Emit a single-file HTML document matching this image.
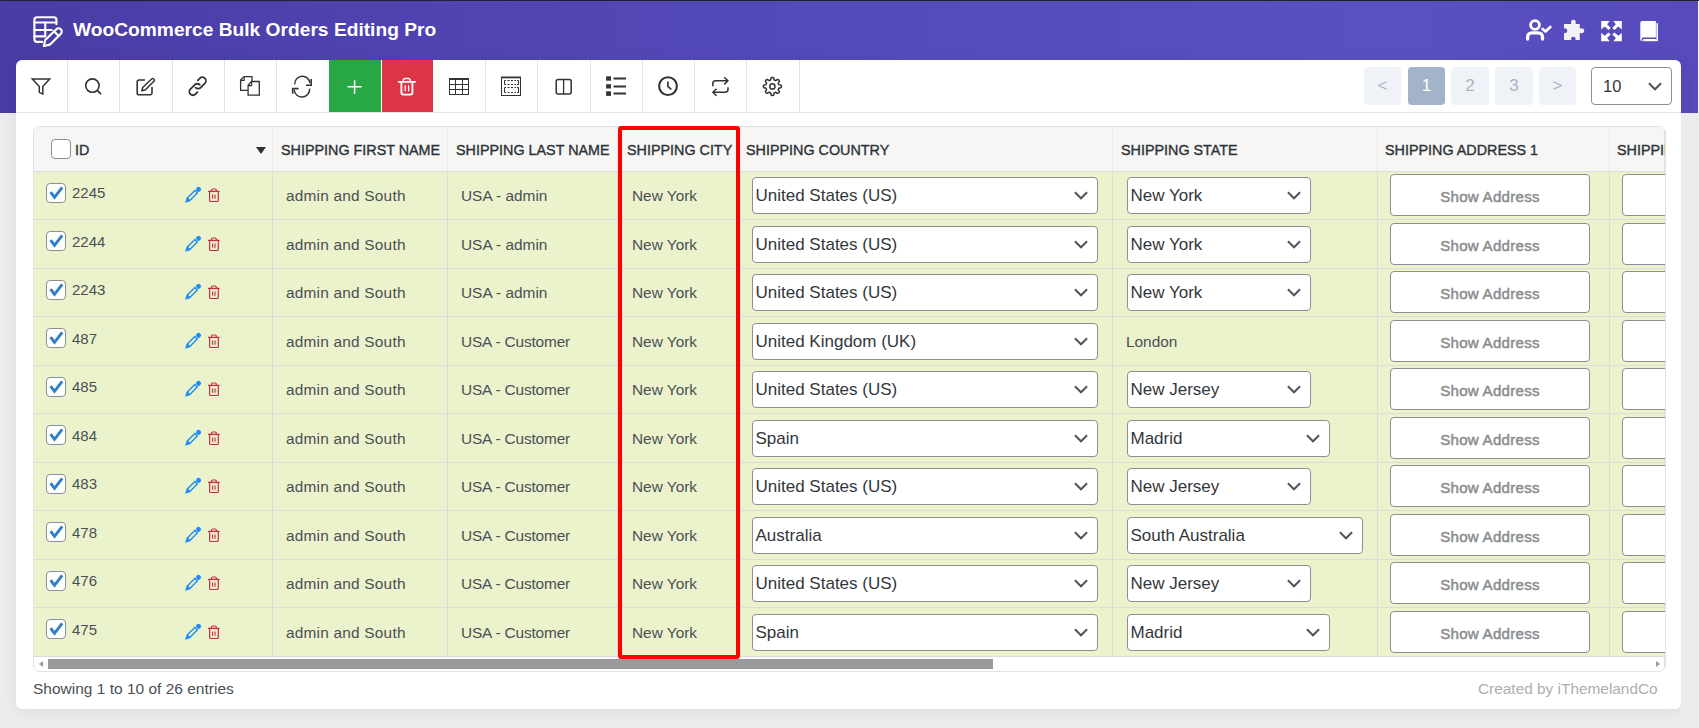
<!DOCTYPE html>
<html><head><meta charset="utf-8">
<style>
*{box-sizing:border-box;margin:0;padding:0}
html,body{width:1699px;height:728px;overflow:hidden}
body{position:relative;background:#ececec;font-family:"Liberation Sans",sans-serif;color:#2c3338}
.abs{position:absolute}
.t{position:absolute;white-space:nowrap}
.hdr{left:0;top:0;width:1699px;height:113px;background:linear-gradient(90deg,rgb(73,60,165) 0px,rgb(80,68,178) 450px,rgb(86,76,188) 1000px,rgb(90,80,194) 1400px,rgb(86,74,188) 1699px)}
.topbar{left:0;top:0;width:1699px;height:1px;background:#1d2327}
.card{left:16px;top:60px;width:1665px;height:649px;background:#fff;border-radius:6px;box-shadow:0 3px 16px rgba(0,0,0,0.07)}
.tb{position:absolute;top:60px;height:52px;border-right:1px solid #e3e3e3}
.tbline{left:16px;top:112px;width:1665px;height:1px;background:#e3e3e3}
.pg{position:absolute;top:67px;width:37px;height:38px;border-radius:4px;background:#eff3f7;color:#a9b4c2;font-size:17px;text-align:center;line-height:38px}
.tbl{left:33px;top:126px;width:1632px;height:546px;border:1px solid #e2e2e2;border-radius:6px;overflow:hidden;background:#fff}
.th{font-weight:400;font-size:14.35px;color:#2c3338;-webkit-text-stroke:0.35px #2c3338;transform:scaleY(1.08);transform-origin:0 78%}
.cell{font-size:15.4px;color:#4b4f54}
.sel{position:absolute;height:37px;border:1px solid #8c8f94;border-radius:4px;background:#fff}
.selt{position:absolute;left:2.5px;top:0;line-height:35px;font-size:17px;color:#32373c;white-space:nowrap}
.btn{position:absolute;height:42px;border:1px solid #8c8f94;border-radius:4px;background:#fff;color:#8a8d91;font-weight:400;font-size:15.1px;letter-spacing:0.25px;-webkit-text-stroke:0.5px #8a8d91;text-align:center;line-height:43px}
.vl{position:absolute;width:1px;background:#dcdcdc}
.hl{position:absolute;height:1px;background:#dcdcdc}
.cb{position:absolute;width:20px;height:20px;border:1px solid #8c8f94;border-radius:4px;background:#fff}
</style></head><body>
<div class="abs hdr"></div>
<div class="abs topbar"></div>

<svg class="abs" style="left:28px;top:10px" width="42" height="42" viewBox="28 10 42 42">
<g fill="none" stroke="#fff" stroke-width="2.1" stroke-linecap="round" stroke-linejoin="round">
<path d="M42.2 41.9 H37 a2.6 2.6 0 0 1 -2.6 -2.6 V19.8 a2.6 2.6 0 0 1 2.6 -2.6 H53.8 a2.6 2.6 0 0 1 2.6 2.6 V24.3"/>
<path d="M34.4 22.5 H56.4"/><path d="M34.4 30 H51.8"/><path d="M34.4 36.4 H44.6"/><path d="M45.25 22.5 V36.4"/>
<g transform="translate(43.8 46) rotate(-44.5)">
<path d="M0 0 L5.2 -3.2 L20.8 -3.2 a3 3 0 0 1 3 3 V0.2 a3 3 0 0 1 -3 3 L5.2 3.2 Z"/>
<path d="M17.6 -3.3 V3.3"/>
</g>
</g></svg>
<div class="t" style="left:73px;top:18px;font-size:19.2px;font-weight:700;color:#fff;line-height:24px">WooCommerce Bulk Orders Editing Pro</div>

<svg class="abs" style="left:1520px;top:14px" width="150" height="32" viewBox="1520 14 150 32">
<circle cx="1535" cy="25" r="4.4" fill="none" stroke="#fff" stroke-width="2.8"/>
<path d="M1527.6 39 V37 a4.2 4.2 0 0 1 4.2 -4.2 H1538.3 a4.2 4.2 0 0 1 4.2 4.2 V39" fill="none" stroke="#fff" stroke-width="3.3" stroke-linecap="round"/>
<path d="M1542.6 29 L1545.5 31.5 L1550.3 27" fill="none" stroke="#fff" stroke-width="2.7" stroke-linecap="round" stroke-linejoin="round"/>
<path fill="#f3f3f3" d="M1564 23.9 H1571.2 V23 A2.4 2.4 0 1 1 1575.6 23 V23.9 H1579.8 V28.6 H1580.8 A2.4 2.4 0 1 1 1580.8 32.9 H1579.8 V39.9 H1575.5 V39.5 A2.2 2.2 0 1 0 1571.2 39.5 V39.9 H1564 V32.9 H1564.6 A2.2 2.2 0 1 0 1564.6 28.6 H1564 Z"/>
<g fill="#fff">
<path d="M1601.2 21 H1609.7 L1607.1 24.3 L1610.7 27.9 L1608.6 29.9 L1604.6 26.5 L1601.2 29.6 Z"/>
<path d="M1621.8 21 H1613.3 L1615.9 24.3 L1612.3 27.9 L1614.4 29.9 L1618.4 26.5 L1621.8 29.6 Z"/>
<path d="M1601.2 41.3 H1609.7 L1607.1 38 L1610.7 34.4 L1608.6 32.4 L1604.6 35.8 L1601.2 32.7 Z"/>
<path d="M1621.8 41.3 H1613.3 L1615.9 38 L1612.3 34.4 L1614.4 32.4 L1618.4 35.8 L1621.8 32.7 Z"/>
<path d="M1642 21 H1655.9 V41 H1642 a1.7 1.7 0 0 1 -1.7 -1.7 V22.7 a1.7 1.7 0 0 1 1.7 -1.7 Z"/>
<rect x="1656.4" y="23.2" width="1.6" height="17.8"/>
<rect x="1642" y="40.4" width="16" height="0.8"/>
</g>
<path d="M1656 38.3 H1643.3 a1 1 0 0 0 0 2" fill="none" stroke="#5648b9" stroke-width="1.4"/>
</svg>

<div class="abs card"></div>
<div class="abs" style="left:67px;top:60px;width:1px;height:52px;background:#e3e3e3"></div>
<div class="abs" style="left:119px;top:60px;width:1px;height:52px;background:#e3e3e3"></div>
<div class="abs" style="left:172px;top:60px;width:1px;height:52px;background:#e3e3e3"></div>
<div class="abs" style="left:224px;top:60px;width:1px;height:52px;background:#e3e3e3"></div>
<div class="abs" style="left:276px;top:60px;width:1px;height:52px;background:#e3e3e3"></div>
<div class="abs" style="left:485px;top:60px;width:1px;height:52px;background:#e3e3e3"></div>
<div class="abs" style="left:537px;top:60px;width:1px;height:52px;background:#e3e3e3"></div>
<div class="abs" style="left:590px;top:60px;width:1px;height:52px;background:#e3e3e3"></div>
<div class="abs" style="left:642px;top:60px;width:1px;height:52px;background:#e3e3e3"></div>
<div class="abs" style="left:694px;top:60px;width:1px;height:52px;background:#e3e3e3"></div>
<div class="abs" style="left:746px;top:60px;width:1px;height:52px;background:#e3e3e3"></div>
<div class="abs" style="left:799px;top:60px;width:1px;height:52px;background:#e3e3e3"></div>
<div class="abs" style="left:329px;top:60px;width:52px;height:52px;background:#28a745"></div>
<div class="abs" style="left:382px;top:60px;width:51px;height:52px;background:#dc3545"></div>
<svg class="abs" style="left:16px;top:60px" width="800" height="52" viewBox="16 60 800 52">
<path d="M32.3 79.1 H49.7 L42.8 86.6 V94.1 L39.3 92.4 V86.6 Z" fill="none" stroke="#333" stroke-width="1.5" stroke-linejoin="miter"/>
<circle cx="92.4" cy="85.6" r="6.7" fill="none" stroke="#333" stroke-width="1.6"/><path d="M97.2 90.4 L101 94.2" fill="none" stroke="#333" stroke-width="1.7"/>
<path d="M145 80 H139 a1.8 1.8 0 0 0 -1.8 1.8 V93 a1.8 1.8 0 0 0 1.8 1.8 H150.2 a1.8 1.8 0 0 0 1.8 -1.8 V87" fill="none" stroke="#333" stroke-width="1.6"/>
<path d="M151.6 79 a1.6 1.6 0 0 1 2.3 2.3 L145.2 90 L141.9 90.8 L142.7 87.5 Z" fill="none" stroke="#333" stroke-width="1.5" stroke-linejoin="round"/>
<path d="M195.6 87.6 a3.6 3.6 0 0 0 5.1 0 L204.9 83.4 a3.6 3.6 0 0 0 -5.1 -5.1 L197.8 80.3" fill="none" stroke="#333" stroke-width="1.8" stroke-linecap="round"/>
<path d="M199.8 84.8 a3.6 3.6 0 0 0 -5.1 0 L190.4 89.1 a3.6 3.6 0 0 0 5.1 5.1 L197.5 92.2" fill="none" stroke="#333" stroke-width="1.8" stroke-linecap="round"/>
<path d="M248 90.4 H240.6 V80 L244 76.6 H252 V82" fill="none" stroke="#333" stroke-width="1.3"/>
<path d="M240.6 80.4 H244.2 V76.6" fill="none" stroke="#333" stroke-width="1.1"/>
<path d="M251.5 81.5 H259.3 V95.2 H248.1 V85.2 Z" fill="none" stroke="#333" stroke-width="1.3"/>
<path d="M248.1 85.6 H251.7 V81.5" fill="none" stroke="#333" stroke-width="1.1"/>
<path d="M294.8 84.4 A7.3 7.3 0 0 1 309.8 83" fill="none" stroke="#333" stroke-width="1.5"/>
<path d="M311.2 79 V85.3 H306" fill="none" stroke="#333" stroke-width="1.6"/>
<path d="M309.6 88.6 A7.3 7.3 0 0 1 294.2 90" fill="none" stroke="#333" stroke-width="1.5"/>
<path d="M298.6 88.6 H292.7 V93.8" fill="none" stroke="#333" stroke-width="1.6"/>
<path d="M354.6 80.2 V93.7 M347.6 86.8 H361.6" stroke="#fff" stroke-width="1.5"/>
<path d="M398.6 81.8 H415.2" stroke="#fff" stroke-width="1.7" stroke-linecap="round"/>
<path d="M403.3 81.6 V80.3 a1.8 1.8 0 0 1 1.8 -1.8 H408.3 a1.8 1.8 0 0 1 1.8 1.8 V81.6" fill="none" stroke="#fff" stroke-width="1.5"/>
<path d="M401.4 81.8 V92.6 a2 2 0 0 0 2 2 H410.4 a2 2 0 0 0 2 -2 V81.8" fill="none" stroke="#fff" stroke-width="1.9"/>
<path d="M405.2 85.3 V91.2 M408.6 85.3 V91.2" stroke="#fff" stroke-width="1.3"/>
<path d="M449.5 78 V95 M468.5 78 V95 M449 94.5 H469 M449 84.5 H469 M449 89.5 H469 M455.5 80 V94 M462.5 80 V94" stroke="#333" stroke-width="1"/>
<rect x="449" y="78" width="20" height="2" fill="#333"/>
<path d="M501.5 77 V96 M520.5 77 V96 M501 95.5 H521" stroke="#333" stroke-width="1"/>
<rect x="501" y="76.5" width="20" height="1.8" fill="#333"/>
<path d="M506 80.5 H504.5 V84.5 H506 M517 80.5 H518.5 V84.5 H517 M507.5 80.5 H509.5 M511 80.5 H513 M514.5 80.5 H516 M507.5 84.5 H509.5 M511 84.5 H513 M514.5 84.5 H516" fill="none" stroke="#333" stroke-width="1"/>
<path d="M506 87.5 H504.5 V92.5 H506 M517 87.5 H518.5 V92.5 H517 M507.5 87.5 H509.5 M511 87.5 H513 M514.5 87.5 H516 M507.5 92.5 H509.5 M511 92.5 H513 M514.5 92.5 H516" fill="none" stroke="#333" stroke-width="1"/>
<rect x="556.2" y="79.4" width="15" height="14.6" rx="2" fill="none" stroke="#333" stroke-width="1.5"/>
<path d="M563.6 79.4 V94" fill="none" stroke="#333" stroke-width="1.3"/>
<rect x="606.1" y="76.3" width="4.9" height="4.4" fill="#333"/><rect x="606.1" y="84.2" width="4.9" height="4.3" fill="#333"/><rect x="606.1" y="91.3" width="4.9" height="4.6" fill="#333"/>
<path d="M613.5 78.6 H626 M613.5 86.4 H626 M613.5 93.6 H626" stroke="#333" stroke-width="2"/>
<circle cx="668" cy="86.1" r="8.9" fill="none" stroke="#333" stroke-width="2.1"/>
<path d="M667.9 81.4 V86.4 L671.3 89.4" fill="none" stroke="#333" stroke-width="1.7"/>
<path d="M712.8 86.2 V83.8 a3 3 0 0 1 3 -3 H728" fill="none" stroke="#333" stroke-width="1.5"/>
<path d="M724.2 77.2 L727.9 80.8 L724.2 84.4" fill="none" stroke="#333" stroke-width="1.5"/>
<path d="M728 87.3 V89.3 a3 3 0 0 1 -3 3 H713" fill="none" stroke="#333" stroke-width="1.5"/>
<path d="M716.5 88.8 L712.9 92.3 L716.5 95.8" fill="none" stroke="#333" stroke-width="1.5"/>
<path d="M772.40 77.40 L772.75 77.41 L773.10 77.47 L773.44 77.60 L773.73 77.98 L773.92 78.75 L774.05 79.52 L774.23 79.91 L774.45 80.09 L774.69 80.20 L774.93 80.30 L775.17 80.40 L775.41 80.49 L775.69 80.52 L776.10 80.37 L776.73 79.91 L777.41 79.50 L777.88 79.44 L778.22 79.59 L778.50 79.80 L778.76 80.04 L779.00 80.30 L779.21 80.58 L779.36 80.92 L779.30 81.39 L778.89 82.07 L778.43 82.70 L778.28 83.11 L778.31 83.39 L778.40 83.63 L778.50 83.87 L778.60 84.11 L778.71 84.35 L778.89 84.57 L779.28 84.75 L780.05 84.88 L780.82 85.07 L781.20 85.36 L781.33 85.70 L781.39 86.05 L781.40 86.40 L781.39 86.75 L781.33 87.10 L781.20 87.44 L780.82 87.73 L780.05 87.92 L779.28 88.05 L778.89 88.23 L778.71 88.45 L778.60 88.69 L778.50 88.93 L778.40 89.17 L778.31 89.41 L778.28 89.69 L778.43 90.10 L778.89 90.73 L779.30 91.41 L779.36 91.88 L779.21 92.22 L779.00 92.50 L778.76 92.76 L778.50 93.00 L778.22 93.21 L777.88 93.36 L777.41 93.30 L776.73 92.89 L776.10 92.43 L775.69 92.28 L775.41 92.31 L775.17 92.40 L774.93 92.50 L774.69 92.60 L774.45 92.71 L774.23 92.89 L774.05 93.28 L773.92 94.05 L773.73 94.82 L773.44 95.20 L773.10 95.33 L772.75 95.39 L772.40 95.40 L772.05 95.39 L771.70 95.33 L771.36 95.20 L771.07 94.82 L770.88 94.05 L770.75 93.28 L770.57 92.89 L770.35 92.71 L770.11 92.60 L769.87 92.50 L769.63 92.40 L769.39 92.31 L769.11 92.28 L768.70 92.43 L768.07 92.89 L767.39 93.30 L766.92 93.36 L766.58 93.21 L766.30 93.00 L766.04 92.76 L765.80 92.50 L765.59 92.22 L765.44 91.88 L765.50 91.41 L765.91 90.73 L766.37 90.10 L766.52 89.69 L766.49 89.41 L766.40 89.17 L766.30 88.93 L766.20 88.69 L766.09 88.45 L765.91 88.23 L765.52 88.05 L764.75 87.92 L763.98 87.73 L763.60 87.44 L763.47 87.10 L763.41 86.75 L763.40 86.40 L763.41 86.05 L763.47 85.70 L763.60 85.36 L763.98 85.07 L764.75 84.88 L765.52 84.75 L765.91 84.57 L766.09 84.35 L766.20 84.11 L766.30 83.87 L766.40 83.63 L766.49 83.39 L766.52 83.11 L766.37 82.70 L765.91 82.07 L765.50 81.39 L765.44 80.92 L765.59 80.58 L765.80 80.30 L766.04 80.04 L766.30 79.80 L766.58 79.59 L766.92 79.44 L767.39 79.50 L768.07 79.91 L768.70 80.37 L769.11 80.52 L769.39 80.49 L769.63 80.40 L769.87 80.30 L770.11 80.20 L770.35 80.09 L770.57 79.91 L770.75 79.52 L770.88 78.75 L771.07 77.98 L771.36 77.60 L771.70 77.47 L772.05 77.41 Z" fill="none" stroke="#333" stroke-width="1.5" stroke-linejoin="round"/>
<circle cx="772.4" cy="86.4" r="2.6" fill="none" stroke="#333" stroke-width="1.5"/>
</svg>
<div class="abs tbline"></div>
<div class="pg" style="left:1364px;width:37px;">&lt;</div>
<div class="pg" style="left:1408px;background:#a3b4ca;color:#fff;width:37px;">1</div>
<div class="pg" style="left:1451px;width:38px;">2</div>
<div class="pg" style="left:1495px;width:38px;">3</div>
<div class="pg" style="left:1539px;width:37px;">&gt;</div>
<div class="sel" style="left:1591px;top:67px;width:81px;height:38px"><div class="selt" style="left:11px;line-height:36px;font-size:16.5px">10</div><svg style="position:absolute;left:56px;top:14px" width="14" height="9" viewBox="0 0 14 9"><path d="M0.9 1.3 L7 7.3 L13.1 1.3" fill="none" stroke="#505459" stroke-width="1.9"/></svg></div>
<div class="abs tbl"></div>
<div class="abs" style="left:34px;top:127px;width:1630px;height:44px;background:#f7f6f5;border-radius:5px 5px 0 0"></div>
<div class="abs" style="left:34px;top:172px;width:1630px;height:484px;background:#ebf3cd"></div>
<div class="hl" style="left:34px;top:171px;width:1630px;background:#dddddd"></div>
<div class="hl" style="left:34px;top:219px;width:1630px"></div>
<div class="hl" style="left:34px;top:268px;width:1630px"></div>
<div class="hl" style="left:34px;top:316px;width:1630px"></div>
<div class="hl" style="left:34px;top:365px;width:1630px"></div>
<div class="hl" style="left:34px;top:413px;width:1630px"></div>
<div class="hl" style="left:34px;top:462px;width:1630px"></div>
<div class="hl" style="left:34px;top:510px;width:1630px"></div>
<div class="hl" style="left:34px;top:559px;width:1630px"></div>
<div class="hl" style="left:34px;top:607px;width:1630px"></div>
<div class="hl" style="left:34px;top:656px;width:1630px"></div>
<div class="vl" style="left:272px;top:127px;height:44px;background:#ebebeb"></div>
<div class="vl" style="left:272px;top:172px;height:484px"></div>
<div class="vl" style="left:447px;top:127px;height:44px;background:#ebebeb"></div>
<div class="vl" style="left:447px;top:172px;height:484px"></div>
<div class="vl" style="left:617px;top:127px;height:44px;background:#ebebeb"></div>
<div class="vl" style="left:617px;top:172px;height:484px"></div>
<div class="vl" style="left:740px;top:127px;height:44px;background:#ebebeb"></div>
<div class="vl" style="left:740px;top:172px;height:484px"></div>
<div class="vl" style="left:1112px;top:127px;height:44px;background:#ebebeb"></div>
<div class="vl" style="left:1112px;top:172px;height:484px"></div>
<div class="vl" style="left:1377px;top:127px;height:44px;background:#ebebeb"></div>
<div class="vl" style="left:1377px;top:172px;height:484px"></div>
<div class="vl" style="left:1609px;top:127px;height:44px;background:#ebebeb"></div>
<div class="vl" style="left:1609px;top:172px;height:484px"></div>
<div class="cb" style="left:51px;top:139px"></div>
<div class="t th" style="left:75px;top:141px;line-height:18px">ID</div>
<svg class="abs" style="left:255px;top:146px" width="12" height="9" viewBox="0 0 12 9"><path d="M1 1 H11 L6 8 Z" fill="#2c3338"/></svg>
<div class="t th" style="left:281px;top:140.5px;line-height:18px">SHIPPING FIRST NAME</div>
<div class="t th" style="left:456px;top:140.5px;line-height:18px">SHIPPING LAST NAME</div>
<div class="t th" style="left:627px;top:140.5px;line-height:18px">SHIPPING CITY</div>
<div class="t th" style="left:746px;top:140.5px;line-height:18px">SHIPPING COUNTRY</div>
<div class="t th" style="left:1121px;top:140.5px;line-height:18px">SHIPPING STATE</div>
<div class="t th" style="left:1385px;top:140.5px;line-height:18px">SHIPPING ADDRESS 1</div>
<div class="t th" style="left:1617px;top:140.5px;line-height:18px">SHIPPING ADDRESS 2</div>
<div class="cb" style="left:46px;top:183px"><svg style="position:absolute;left:-1px;top:-1px" width="20" height="20" viewBox="46 11 20 20"><path d="M50.6 20.1 L54.5 25.3 L62.2 15.3" fill="none" stroke="#2f7fc8" stroke-width="2.9" stroke-linecap="butt" stroke-linejoin="miter"/></svg></div>
<div class="t cell" style="left:72px;top:183px;line-height:20px;font-size:15px">2245</div>
<svg class="abs" style="left:180px;top:172px" width="45" height="40" viewBox="180 0 45 40">
<g transform="translate(185.1 30.8) rotate(-45)" fill="#1f8cf0">
<path d="M0 0 L4.6 -2.45 L4.6 2.45 Z"/>
<rect x="4.9" y="-1.75" width="10.6" height="3.5" fill="none" stroke="#1f8cf0" stroke-width="1.4"/>
<rect x="16.6" y="-2.45" width="4.8" height="4.9" rx="2.2"/>
</g>
<g fill="none" stroke="#cf2a43" transform="translate(0 -0.5)">
<path d="M208 19.9 H219.6" stroke-width="1.3"/>
<path d="M211.5 19.9 V18.6 a1.1 1.1 0 0 1 1.1 -1.1 H215.2 a1.1 1.1 0 0 1 1.1 1.1 V19.9" stroke-width="1.2"/>
<path d="M209.6 19.9 V29 a1 1 0 0 0 1 1 H217.3 a1 1 0 0 0 1 -1 V19.9" stroke-width="1.2"/>
<path d="M212.6 22.9 V27.2 M215 22.9 V27.2" stroke-width="1.1"/>
</g></svg>
<div class="t cell" style="left:286px;top:186px;line-height:20px;letter-spacing:0.22px">admin and South</div>
<div class="t cell" style="left:461px;top:186px;line-height:20px;letter-spacing:0px">USA - admin</div>
<div class="t cell" style="left:632px;top:186px;line-height:20px;letter-spacing:0px">New York</div>
<div class="sel" style="left:752px;top:177px;width:346px"><div class="selt">United States (US)</div><svg style="position:absolute;left:321px;top:13px" width="14" height="9" viewBox="0 0 14 9"><path d="M0.9 1.3 L7 7.3 L13.1 1.3" fill="none" stroke="#505459" stroke-width="1.9"/></svg></div>
<div class="sel" style="left:1127px;top:177px;width:184px"><div class="selt">New York</div><svg style="position:absolute;left:159px;top:13px" width="14" height="9" viewBox="0 0 14 9"><path d="M0.9 1.3 L7 7.3 L13.1 1.3" fill="none" stroke="#505459" stroke-width="1.9"/></svg></div>
<div class="btn" style="left:1390px;top:174px;width:200px">Show Address</div>
<div class="btn" style="left:1622px;top:174px;width:200px"></div>
<div class="cb" style="left:46px;top:231px"><svg style="position:absolute;left:-1px;top:-1px" width="20" height="20" viewBox="46 11 20 20"><path d="M50.6 20.1 L54.5 25.3 L62.2 15.3" fill="none" stroke="#2f7fc8" stroke-width="2.9" stroke-linecap="butt" stroke-linejoin="miter"/></svg></div>
<div class="t cell" style="left:72px;top:232px;line-height:20px;font-size:15px">2244</div>
<svg class="abs" style="left:180px;top:221px" width="45" height="40" viewBox="180 0 45 40">
<g transform="translate(185.1 30.8) rotate(-45)" fill="#1f8cf0">
<path d="M0 0 L4.6 -2.45 L4.6 2.45 Z"/>
<rect x="4.9" y="-1.75" width="10.6" height="3.5" fill="none" stroke="#1f8cf0" stroke-width="1.4"/>
<rect x="16.6" y="-2.45" width="4.8" height="4.9" rx="2.2"/>
</g>
<g fill="none" stroke="#cf2a43" transform="translate(0 -0.5)">
<path d="M208 19.9 H219.6" stroke-width="1.3"/>
<path d="M211.5 19.9 V18.6 a1.1 1.1 0 0 1 1.1 -1.1 H215.2 a1.1 1.1 0 0 1 1.1 1.1 V19.9" stroke-width="1.2"/>
<path d="M209.6 19.9 V29 a1 1 0 0 0 1 1 H217.3 a1 1 0 0 0 1 -1 V19.9" stroke-width="1.2"/>
<path d="M212.6 22.9 V27.2 M215 22.9 V27.2" stroke-width="1.1"/>
</g></svg>
<div class="t cell" style="left:286px;top:235px;line-height:20px;letter-spacing:0.22px">admin and South</div>
<div class="t cell" style="left:461px;top:235px;line-height:20px;letter-spacing:0px">USA - admin</div>
<div class="t cell" style="left:632px;top:235px;line-height:20px;letter-spacing:0px">New York</div>
<div class="sel" style="left:752px;top:226px;width:346px"><div class="selt">United States (US)</div><svg style="position:absolute;left:321px;top:13px" width="14" height="9" viewBox="0 0 14 9"><path d="M0.9 1.3 L7 7.3 L13.1 1.3" fill="none" stroke="#505459" stroke-width="1.9"/></svg></div>
<div class="sel" style="left:1127px;top:226px;width:184px"><div class="selt">New York</div><svg style="position:absolute;left:159px;top:13px" width="14" height="9" viewBox="0 0 14 9"><path d="M0.9 1.3 L7 7.3 L13.1 1.3" fill="none" stroke="#505459" stroke-width="1.9"/></svg></div>
<div class="btn" style="left:1390px;top:223px;width:200px">Show Address</div>
<div class="btn" style="left:1622px;top:223px;width:200px"></div>
<div class="cb" style="left:46px;top:280px"><svg style="position:absolute;left:-1px;top:-1px" width="20" height="20" viewBox="46 11 20 20"><path d="M50.6 20.1 L54.5 25.3 L62.2 15.3" fill="none" stroke="#2f7fc8" stroke-width="2.9" stroke-linecap="butt" stroke-linejoin="miter"/></svg></div>
<div class="t cell" style="left:72px;top:280px;line-height:20px;font-size:15px">2243</div>
<svg class="abs" style="left:180px;top:269px" width="45" height="40" viewBox="180 0 45 40">
<g transform="translate(185.1 30.8) rotate(-45)" fill="#1f8cf0">
<path d="M0 0 L4.6 -2.45 L4.6 2.45 Z"/>
<rect x="4.9" y="-1.75" width="10.6" height="3.5" fill="none" stroke="#1f8cf0" stroke-width="1.4"/>
<rect x="16.6" y="-2.45" width="4.8" height="4.9" rx="2.2"/>
</g>
<g fill="none" stroke="#cf2a43" transform="translate(0 -0.5)">
<path d="M208 19.9 H219.6" stroke-width="1.3"/>
<path d="M211.5 19.9 V18.6 a1.1 1.1 0 0 1 1.1 -1.1 H215.2 a1.1 1.1 0 0 1 1.1 1.1 V19.9" stroke-width="1.2"/>
<path d="M209.6 19.9 V29 a1 1 0 0 0 1 1 H217.3 a1 1 0 0 0 1 -1 V19.9" stroke-width="1.2"/>
<path d="M212.6 22.9 V27.2 M215 22.9 V27.2" stroke-width="1.1"/>
</g></svg>
<div class="t cell" style="left:286px;top:283px;line-height:20px;letter-spacing:0.22px">admin and South</div>
<div class="t cell" style="left:461px;top:283px;line-height:20px;letter-spacing:0px">USA - admin</div>
<div class="t cell" style="left:632px;top:283px;line-height:20px;letter-spacing:0px">New York</div>
<div class="sel" style="left:752px;top:274px;width:346px"><div class="selt">United States (US)</div><svg style="position:absolute;left:321px;top:13px" width="14" height="9" viewBox="0 0 14 9"><path d="M0.9 1.3 L7 7.3 L13.1 1.3" fill="none" stroke="#505459" stroke-width="1.9"/></svg></div>
<div class="sel" style="left:1127px;top:274px;width:184px"><div class="selt">New York</div><svg style="position:absolute;left:159px;top:13px" width="14" height="9" viewBox="0 0 14 9"><path d="M0.9 1.3 L7 7.3 L13.1 1.3" fill="none" stroke="#505459" stroke-width="1.9"/></svg></div>
<div class="btn" style="left:1390px;top:271px;width:200px">Show Address</div>
<div class="btn" style="left:1622px;top:271px;width:200px"></div>
<div class="cb" style="left:46px;top:328px"><svg style="position:absolute;left:-1px;top:-1px" width="20" height="20" viewBox="46 11 20 20"><path d="M50.6 20.1 L54.5 25.3 L62.2 15.3" fill="none" stroke="#2f7fc8" stroke-width="2.9" stroke-linecap="butt" stroke-linejoin="miter"/></svg></div>
<div class="t cell" style="left:72px;top:329px;line-height:20px;font-size:15px">487</div>
<svg class="abs" style="left:180px;top:318px" width="45" height="40" viewBox="180 0 45 40">
<g transform="translate(185.1 30.8) rotate(-45)" fill="#1f8cf0">
<path d="M0 0 L4.6 -2.45 L4.6 2.45 Z"/>
<rect x="4.9" y="-1.75" width="10.6" height="3.5" fill="none" stroke="#1f8cf0" stroke-width="1.4"/>
<rect x="16.6" y="-2.45" width="4.8" height="4.9" rx="2.2"/>
</g>
<g fill="none" stroke="#cf2a43" transform="translate(0 -0.5)">
<path d="M208 19.9 H219.6" stroke-width="1.3"/>
<path d="M211.5 19.9 V18.6 a1.1 1.1 0 0 1 1.1 -1.1 H215.2 a1.1 1.1 0 0 1 1.1 1.1 V19.9" stroke-width="1.2"/>
<path d="M209.6 19.9 V29 a1 1 0 0 0 1 1 H217.3 a1 1 0 0 0 1 -1 V19.9" stroke-width="1.2"/>
<path d="M212.6 22.9 V27.2 M215 22.9 V27.2" stroke-width="1.1"/>
</g></svg>
<div class="t cell" style="left:286px;top:332px;line-height:20px;letter-spacing:0.22px">admin and South</div>
<div class="t cell" style="left:461px;top:332px;line-height:20px;letter-spacing:-0.15px">USA - Customer</div>
<div class="t cell" style="left:632px;top:332px;line-height:20px;letter-spacing:0px">New York</div>
<div class="sel" style="left:752px;top:323px;width:346px"><div class="selt">United Kingdom (UK)</div><svg style="position:absolute;left:321px;top:13px" width="14" height="9" viewBox="0 0 14 9"><path d="M0.9 1.3 L7 7.3 L13.1 1.3" fill="none" stroke="#505459" stroke-width="1.9"/></svg></div>
<div class="t cell" style="left:1126px;top:332px;line-height:20px">London</div>
<div class="btn" style="left:1390px;top:320px;width:200px">Show Address</div>
<div class="btn" style="left:1622px;top:320px;width:200px"></div>
<div class="cb" style="left:46px;top:377px"><svg style="position:absolute;left:-1px;top:-1px" width="20" height="20" viewBox="46 11 20 20"><path d="M50.6 20.1 L54.5 25.3 L62.2 15.3" fill="none" stroke="#2f7fc8" stroke-width="2.9" stroke-linecap="butt" stroke-linejoin="miter"/></svg></div>
<div class="t cell" style="left:72px;top:377px;line-height:20px;font-size:15px">485</div>
<svg class="abs" style="left:180px;top:366px" width="45" height="40" viewBox="180 0 45 40">
<g transform="translate(185.1 30.8) rotate(-45)" fill="#1f8cf0">
<path d="M0 0 L4.6 -2.45 L4.6 2.45 Z"/>
<rect x="4.9" y="-1.75" width="10.6" height="3.5" fill="none" stroke="#1f8cf0" stroke-width="1.4"/>
<rect x="16.6" y="-2.45" width="4.8" height="4.9" rx="2.2"/>
</g>
<g fill="none" stroke="#cf2a43" transform="translate(0 -0.5)">
<path d="M208 19.9 H219.6" stroke-width="1.3"/>
<path d="M211.5 19.9 V18.6 a1.1 1.1 0 0 1 1.1 -1.1 H215.2 a1.1 1.1 0 0 1 1.1 1.1 V19.9" stroke-width="1.2"/>
<path d="M209.6 19.9 V29 a1 1 0 0 0 1 1 H217.3 a1 1 0 0 0 1 -1 V19.9" stroke-width="1.2"/>
<path d="M212.6 22.9 V27.2 M215 22.9 V27.2" stroke-width="1.1"/>
</g></svg>
<div class="t cell" style="left:286px;top:380px;line-height:20px;letter-spacing:0.22px">admin and South</div>
<div class="t cell" style="left:461px;top:380px;line-height:20px;letter-spacing:-0.15px">USA - Customer</div>
<div class="t cell" style="left:632px;top:380px;line-height:20px;letter-spacing:0px">New York</div>
<div class="sel" style="left:752px;top:371px;width:346px"><div class="selt">United States (US)</div><svg style="position:absolute;left:321px;top:13px" width="14" height="9" viewBox="0 0 14 9"><path d="M0.9 1.3 L7 7.3 L13.1 1.3" fill="none" stroke="#505459" stroke-width="1.9"/></svg></div>
<div class="sel" style="left:1127px;top:371px;width:184px"><div class="selt">New Jersey</div><svg style="position:absolute;left:159px;top:13px" width="14" height="9" viewBox="0 0 14 9"><path d="M0.9 1.3 L7 7.3 L13.1 1.3" fill="none" stroke="#505459" stroke-width="1.9"/></svg></div>
<div class="btn" style="left:1390px;top:368px;width:200px">Show Address</div>
<div class="btn" style="left:1622px;top:368px;width:200px"></div>
<div class="cb" style="left:46px;top:425px"><svg style="position:absolute;left:-1px;top:-1px" width="20" height="20" viewBox="46 11 20 20"><path d="M50.6 20.1 L54.5 25.3 L62.2 15.3" fill="none" stroke="#2f7fc8" stroke-width="2.9" stroke-linecap="butt" stroke-linejoin="miter"/></svg></div>
<div class="t cell" style="left:72px;top:426px;line-height:20px;font-size:15px">484</div>
<svg class="abs" style="left:180px;top:415px" width="45" height="40" viewBox="180 0 45 40">
<g transform="translate(185.1 30.8) rotate(-45)" fill="#1f8cf0">
<path d="M0 0 L4.6 -2.45 L4.6 2.45 Z"/>
<rect x="4.9" y="-1.75" width="10.6" height="3.5" fill="none" stroke="#1f8cf0" stroke-width="1.4"/>
<rect x="16.6" y="-2.45" width="4.8" height="4.9" rx="2.2"/>
</g>
<g fill="none" stroke="#cf2a43" transform="translate(0 -0.5)">
<path d="M208 19.9 H219.6" stroke-width="1.3"/>
<path d="M211.5 19.9 V18.6 a1.1 1.1 0 0 1 1.1 -1.1 H215.2 a1.1 1.1 0 0 1 1.1 1.1 V19.9" stroke-width="1.2"/>
<path d="M209.6 19.9 V29 a1 1 0 0 0 1 1 H217.3 a1 1 0 0 0 1 -1 V19.9" stroke-width="1.2"/>
<path d="M212.6 22.9 V27.2 M215 22.9 V27.2" stroke-width="1.1"/>
</g></svg>
<div class="t cell" style="left:286px;top:429px;line-height:20px;letter-spacing:0.22px">admin and South</div>
<div class="t cell" style="left:461px;top:429px;line-height:20px;letter-spacing:-0.15px">USA - Customer</div>
<div class="t cell" style="left:632px;top:429px;line-height:20px;letter-spacing:0px">New York</div>
<div class="sel" style="left:752px;top:420px;width:346px"><div class="selt">Spain</div><svg style="position:absolute;left:321px;top:13px" width="14" height="9" viewBox="0 0 14 9"><path d="M0.9 1.3 L7 7.3 L13.1 1.3" fill="none" stroke="#505459" stroke-width="1.9"/></svg></div>
<div class="sel" style="left:1127px;top:420px;width:203px"><div class="selt">Madrid</div><svg style="position:absolute;left:178px;top:13px" width="14" height="9" viewBox="0 0 14 9"><path d="M0.9 1.3 L7 7.3 L13.1 1.3" fill="none" stroke="#505459" stroke-width="1.9"/></svg></div>
<div class="btn" style="left:1390px;top:417px;width:200px">Show Address</div>
<div class="btn" style="left:1622px;top:417px;width:200px"></div>
<div class="cb" style="left:46px;top:474px"><svg style="position:absolute;left:-1px;top:-1px" width="20" height="20" viewBox="46 11 20 20"><path d="M50.6 20.1 L54.5 25.3 L62.2 15.3" fill="none" stroke="#2f7fc8" stroke-width="2.9" stroke-linecap="butt" stroke-linejoin="miter"/></svg></div>
<div class="t cell" style="left:72px;top:474px;line-height:20px;font-size:15px">483</div>
<svg class="abs" style="left:180px;top:463px" width="45" height="40" viewBox="180 0 45 40">
<g transform="translate(185.1 30.8) rotate(-45)" fill="#1f8cf0">
<path d="M0 0 L4.6 -2.45 L4.6 2.45 Z"/>
<rect x="4.9" y="-1.75" width="10.6" height="3.5" fill="none" stroke="#1f8cf0" stroke-width="1.4"/>
<rect x="16.6" y="-2.45" width="4.8" height="4.9" rx="2.2"/>
</g>
<g fill="none" stroke="#cf2a43" transform="translate(0 -0.5)">
<path d="M208 19.9 H219.6" stroke-width="1.3"/>
<path d="M211.5 19.9 V18.6 a1.1 1.1 0 0 1 1.1 -1.1 H215.2 a1.1 1.1 0 0 1 1.1 1.1 V19.9" stroke-width="1.2"/>
<path d="M209.6 19.9 V29 a1 1 0 0 0 1 1 H217.3 a1 1 0 0 0 1 -1 V19.9" stroke-width="1.2"/>
<path d="M212.6 22.9 V27.2 M215 22.9 V27.2" stroke-width="1.1"/>
</g></svg>
<div class="t cell" style="left:286px;top:477px;line-height:20px;letter-spacing:0.22px">admin and South</div>
<div class="t cell" style="left:461px;top:477px;line-height:20px;letter-spacing:-0.15px">USA - Customer</div>
<div class="t cell" style="left:632px;top:477px;line-height:20px;letter-spacing:0px">New York</div>
<div class="sel" style="left:752px;top:468px;width:346px"><div class="selt">United States (US)</div><svg style="position:absolute;left:321px;top:13px" width="14" height="9" viewBox="0 0 14 9"><path d="M0.9 1.3 L7 7.3 L13.1 1.3" fill="none" stroke="#505459" stroke-width="1.9"/></svg></div>
<div class="sel" style="left:1127px;top:468px;width:184px"><div class="selt">New Jersey</div><svg style="position:absolute;left:159px;top:13px" width="14" height="9" viewBox="0 0 14 9"><path d="M0.9 1.3 L7 7.3 L13.1 1.3" fill="none" stroke="#505459" stroke-width="1.9"/></svg></div>
<div class="btn" style="left:1390px;top:465px;width:200px">Show Address</div>
<div class="btn" style="left:1622px;top:465px;width:200px"></div>
<div class="cb" style="left:46px;top:522px"><svg style="position:absolute;left:-1px;top:-1px" width="20" height="20" viewBox="46 11 20 20"><path d="M50.6 20.1 L54.5 25.3 L62.2 15.3" fill="none" stroke="#2f7fc8" stroke-width="2.9" stroke-linecap="butt" stroke-linejoin="miter"/></svg></div>
<div class="t cell" style="left:72px;top:523px;line-height:20px;font-size:15px">478</div>
<svg class="abs" style="left:180px;top:512px" width="45" height="40" viewBox="180 0 45 40">
<g transform="translate(185.1 30.8) rotate(-45)" fill="#1f8cf0">
<path d="M0 0 L4.6 -2.45 L4.6 2.45 Z"/>
<rect x="4.9" y="-1.75" width="10.6" height="3.5" fill="none" stroke="#1f8cf0" stroke-width="1.4"/>
<rect x="16.6" y="-2.45" width="4.8" height="4.9" rx="2.2"/>
</g>
<g fill="none" stroke="#cf2a43" transform="translate(0 -0.5)">
<path d="M208 19.9 H219.6" stroke-width="1.3"/>
<path d="M211.5 19.9 V18.6 a1.1 1.1 0 0 1 1.1 -1.1 H215.2 a1.1 1.1 0 0 1 1.1 1.1 V19.9" stroke-width="1.2"/>
<path d="M209.6 19.9 V29 a1 1 0 0 0 1 1 H217.3 a1 1 0 0 0 1 -1 V19.9" stroke-width="1.2"/>
<path d="M212.6 22.9 V27.2 M215 22.9 V27.2" stroke-width="1.1"/>
</g></svg>
<div class="t cell" style="left:286px;top:526px;line-height:20px;letter-spacing:0.22px">admin and South</div>
<div class="t cell" style="left:461px;top:526px;line-height:20px;letter-spacing:-0.15px">USA - Customer</div>
<div class="t cell" style="left:632px;top:526px;line-height:20px;letter-spacing:0px">New York</div>
<div class="sel" style="left:752px;top:517px;width:346px"><div class="selt">Australia</div><svg style="position:absolute;left:321px;top:13px" width="14" height="9" viewBox="0 0 14 9"><path d="M0.9 1.3 L7 7.3 L13.1 1.3" fill="none" stroke="#505459" stroke-width="1.9"/></svg></div>
<div class="sel" style="left:1127px;top:517px;width:236px"><div class="selt">South Australia</div><svg style="position:absolute;left:211px;top:13px" width="14" height="9" viewBox="0 0 14 9"><path d="M0.9 1.3 L7 7.3 L13.1 1.3" fill="none" stroke="#505459" stroke-width="1.9"/></svg></div>
<div class="btn" style="left:1390px;top:514px;width:200px">Show Address</div>
<div class="btn" style="left:1622px;top:514px;width:200px"></div>
<div class="cb" style="left:46px;top:571px"><svg style="position:absolute;left:-1px;top:-1px" width="20" height="20" viewBox="46 11 20 20"><path d="M50.6 20.1 L54.5 25.3 L62.2 15.3" fill="none" stroke="#2f7fc8" stroke-width="2.9" stroke-linecap="butt" stroke-linejoin="miter"/></svg></div>
<div class="t cell" style="left:72px;top:571px;line-height:20px;font-size:15px">476</div>
<svg class="abs" style="left:180px;top:560px" width="45" height="40" viewBox="180 0 45 40">
<g transform="translate(185.1 30.8) rotate(-45)" fill="#1f8cf0">
<path d="M0 0 L4.6 -2.45 L4.6 2.45 Z"/>
<rect x="4.9" y="-1.75" width="10.6" height="3.5" fill="none" stroke="#1f8cf0" stroke-width="1.4"/>
<rect x="16.6" y="-2.45" width="4.8" height="4.9" rx="2.2"/>
</g>
<g fill="none" stroke="#cf2a43" transform="translate(0 -0.5)">
<path d="M208 19.9 H219.6" stroke-width="1.3"/>
<path d="M211.5 19.9 V18.6 a1.1 1.1 0 0 1 1.1 -1.1 H215.2 a1.1 1.1 0 0 1 1.1 1.1 V19.9" stroke-width="1.2"/>
<path d="M209.6 19.9 V29 a1 1 0 0 0 1 1 H217.3 a1 1 0 0 0 1 -1 V19.9" stroke-width="1.2"/>
<path d="M212.6 22.9 V27.2 M215 22.9 V27.2" stroke-width="1.1"/>
</g></svg>
<div class="t cell" style="left:286px;top:574px;line-height:20px;letter-spacing:0.22px">admin and South</div>
<div class="t cell" style="left:461px;top:574px;line-height:20px;letter-spacing:-0.15px">USA - Customer</div>
<div class="t cell" style="left:632px;top:574px;line-height:20px;letter-spacing:0px">New York</div>
<div class="sel" style="left:752px;top:565px;width:346px"><div class="selt">United States (US)</div><svg style="position:absolute;left:321px;top:13px" width="14" height="9" viewBox="0 0 14 9"><path d="M0.9 1.3 L7 7.3 L13.1 1.3" fill="none" stroke="#505459" stroke-width="1.9"/></svg></div>
<div class="sel" style="left:1127px;top:565px;width:184px"><div class="selt">New Jersey</div><svg style="position:absolute;left:159px;top:13px" width="14" height="9" viewBox="0 0 14 9"><path d="M0.9 1.3 L7 7.3 L13.1 1.3" fill="none" stroke="#505459" stroke-width="1.9"/></svg></div>
<div class="btn" style="left:1390px;top:562px;width:200px">Show Address</div>
<div class="btn" style="left:1622px;top:562px;width:200px"></div>
<div class="cb" style="left:46px;top:619px"><svg style="position:absolute;left:-1px;top:-1px" width="20" height="20" viewBox="46 11 20 20"><path d="M50.6 20.1 L54.5 25.3 L62.2 15.3" fill="none" stroke="#2f7fc8" stroke-width="2.9" stroke-linecap="butt" stroke-linejoin="miter"/></svg></div>
<div class="t cell" style="left:72px;top:620px;line-height:20px;font-size:15px">475</div>
<svg class="abs" style="left:180px;top:609px" width="45" height="40" viewBox="180 0 45 40">
<g transform="translate(185.1 30.8) rotate(-45)" fill="#1f8cf0">
<path d="M0 0 L4.6 -2.45 L4.6 2.45 Z"/>
<rect x="4.9" y="-1.75" width="10.6" height="3.5" fill="none" stroke="#1f8cf0" stroke-width="1.4"/>
<rect x="16.6" y="-2.45" width="4.8" height="4.9" rx="2.2"/>
</g>
<g fill="none" stroke="#cf2a43" transform="translate(0 -0.5)">
<path d="M208 19.9 H219.6" stroke-width="1.3"/>
<path d="M211.5 19.9 V18.6 a1.1 1.1 0 0 1 1.1 -1.1 H215.2 a1.1 1.1 0 0 1 1.1 1.1 V19.9" stroke-width="1.2"/>
<path d="M209.6 19.9 V29 a1 1 0 0 0 1 1 H217.3 a1 1 0 0 0 1 -1 V19.9" stroke-width="1.2"/>
<path d="M212.6 22.9 V27.2 M215 22.9 V27.2" stroke-width="1.1"/>
</g></svg>
<div class="t cell" style="left:286px;top:623px;line-height:20px;letter-spacing:0.22px">admin and South</div>
<div class="t cell" style="left:461px;top:623px;line-height:20px;letter-spacing:-0.15px">USA - Customer</div>
<div class="t cell" style="left:632px;top:623px;line-height:20px;letter-spacing:0px">New York</div>
<div class="sel" style="left:752px;top:614px;width:346px"><div class="selt">Spain</div><svg style="position:absolute;left:321px;top:13px" width="14" height="9" viewBox="0 0 14 9"><path d="M0.9 1.3 L7 7.3 L13.1 1.3" fill="none" stroke="#505459" stroke-width="1.9"/></svg></div>
<div class="sel" style="left:1127px;top:614px;width:203px"><div class="selt">Madrid</div><svg style="position:absolute;left:178px;top:13px" width="14" height="9" viewBox="0 0 14 9"><path d="M0.9 1.3 L7 7.3 L13.1 1.3" fill="none" stroke="#505459" stroke-width="1.9"/></svg></div>
<div class="btn" style="left:1390px;top:611px;width:200px">Show Address</div>
<div class="btn" style="left:1622px;top:611px;width:200px"></div>
<div class="abs" style="left:1665px;top:120px;width:16px;height:560px;background:#fff"></div>
<div class="abs" style="left:1681px;top:113px;width:18px;height:615px;background:#ececec"></div>
<div class="vl" style="left:1665px;top:130px;height:538px;background:#e2e2e2"></div>
<div class="abs" style="left:48px;top:659px;width:945px;height:10px;background:#9a9a9a"></div>
<svg class="abs" style="left:37px;top:660px" width="8" height="8" viewBox="0 0 8 8"><path d="M6 1 L2 4 L6 7 Z" fill="#9a9a9a"/></svg>
<svg class="abs" style="left:1654px;top:660px" width="8" height="8" viewBox="0 0 8 8"><path d="M2 1 L6 4 L2 7 Z" fill="#9a9a9a"/></svg>
<div class="abs" style="left:618px;top:126px;width:122px;height:533px;border:4px solid #ff0000;border-radius:3px"></div>
<div class="t" style="left:33px;top:679px;font-size:15.5px;line-height:20px;color:#4b4f54">Showing 1 to 10 of 26 entries</div>
<div class="t" style="left:1478px;top:679px;font-size:15.4px;line-height:20px;color:#aeaeae">Created by iThemelandCo</div>
<div class="abs" style="left:1698px;top:1px;width:1px;height:112px;background:#f6f6f2"></div>
<div class="abs" style="left:1698px;top:113px;width:1px;height:615px;background:#efefef"></div>
</body></html>
